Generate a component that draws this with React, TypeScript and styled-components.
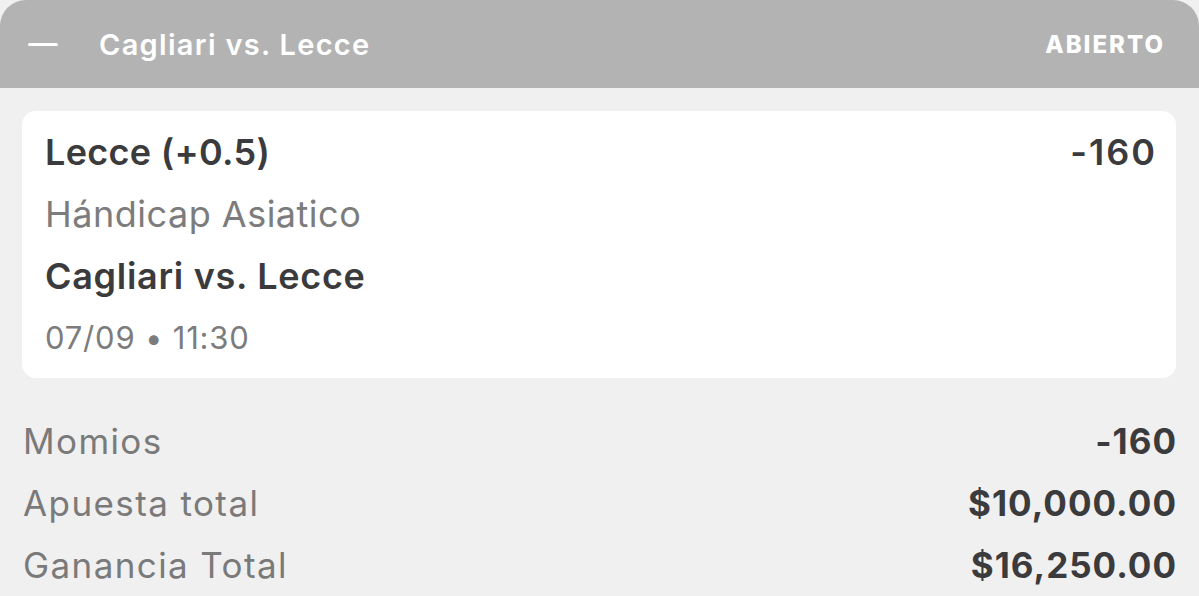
import React from 'react';
import styled, { createGlobalStyle } from 'styled-components';

const GlobalStyle = createGlobalStyle`
  html, body {
    margin: 0;
    padding: 0;
    background: #f0f0f0;
    font-family: Inter, "Noto Sans", sans-serif;
  }
`;

const Panel = styled.div`
  width: 1199px;
  height: 596px;
  overflow: hidden;
  background: #f0f0f0;
`;

const Header = styled.div`
  height: 88px;
  background: #b3b3b3;
  border-radius: 26px 26px 0 0;
  display: flex;
  align-items: center;
  padding: 0 36px 0 28px;
  color: #fff;
`;

const Collapse = styled.span`
  width: 30px;
  height: 3px;
  background: #fff;
  border-radius: 2px;
  margin-right: 41px;
`;

const HeaderTitle = styled.div`
  flex: 1;
  font-size: 29px;
  font-weight: 600;
  letter-spacing: 1.3px;
`;

const Status = styled.div`
  font-size: 24px;
  font-weight: 800;
  letter-spacing: 2px;
  margin-right: -2px;
`;

const Card = styled.div`
  margin: 23px 23px 0 22px;
  background: #fff;
  border-radius: 14px;
  padding: 10px 23px 9px;
`;

const CardRow = styled.div`
  display: flex;
  justify-content: space-between;
  align-items: baseline;
`;

const Line = styled.div<{ $bold?: boolean; $size?: number; $spacing?: number }>`
  font-size: ${(p) => p.$size ?? 36}px;
  line-height: 62px;
  letter-spacing: ${(p) => p.$spacing ?? 0.5}px;
  font-weight: ${(p) => (p.$bold ? 600 : 400)};
  color: ${(p) => (p.$bold ? '#3b3b3d' : '#7c7c7c')};
`;

const Odds = styled(Line)`
  margin-right: -4px;
`;

const Summary = styled.div`
  padding: 32px 23px 0 23px;
`;

const SummaryRow = styled.div`
  display: flex;
  justify-content: space-between;
  align-items: baseline;
  line-height: 62px;
`;

const Label = styled.span`
  font-size: 35px;
  letter-spacing: 1.4px;
  color: #7a7a7a;
`;

const Value = styled.span`
  font-size: 35px;
  font-weight: 700;
  letter-spacing: 1px;
  color: #3b3b3d;
  margin-right: -1px;
`;

const summary = [
  { label: 'Momios', value: '-160' },
  { label: 'Apuesta total', value: '$10,000.00' },
  { label: 'Ganancia Total', value: '$16,250.00' },
];

const App: React.FC = () => {
  return (
    <Panel>
      <GlobalStyle />
      <Header>
        <Collapse />
        <HeaderTitle>Cagliari vs. Lecce</HeaderTitle>
        <Status>ABIERTO</Status>
      </Header>
      <Card>
        <CardRow>
          <Line $bold $spacing={0.3}>Lecce (+0.5)</Line>
          <Odds $bold $spacing={2}>-160</Odds>
        </CardRow>
        <Line>Hándicap Asiatico</Line>
        <Line $bold $spacing={0.7}>Cagliari vs. Lecce</Line>
        <Line $size={31} $spacing={0.8}>07/09 • 11:30</Line>
      </Card>
      <Summary>
        {summary.map((row) => (
          <SummaryRow key={row.label}>
            <Label>{row.label}</Label>
            <Value>{row.value}</Value>
          </SummaryRow>
        ))}
      </Summary>
    </Panel>
  );
};

export default App;
